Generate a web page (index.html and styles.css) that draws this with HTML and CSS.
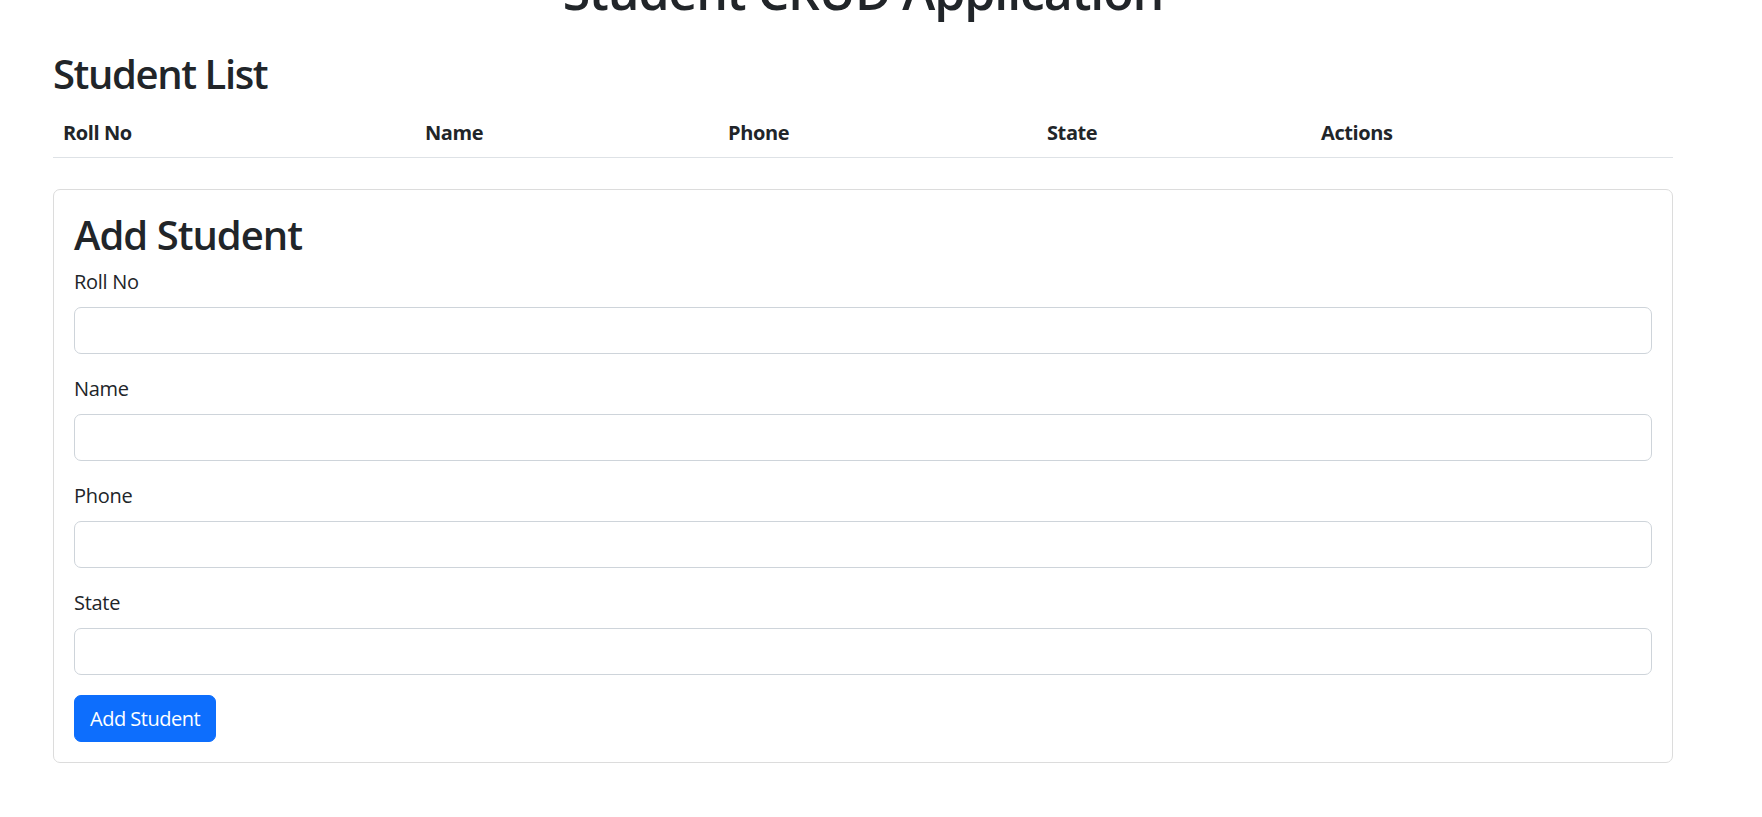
FILE: index.html
```html
<!DOCTYPE html>
<html lang="en">
<head>
<meta charset="utf-8">
<title>Student CRUD Application</title>
<link rel="stylesheet" href="styles.css">
</head>
<body>
<div class="container">
  <h1 class="app-title">Student CRUD Application</h1>
  <h2 class="section-title">Student List</h2>
  <table class="student-table">
    <colgroup>
      <col class="col-roll">
      <col class="col-name">
      <col class="col-phone">
      <col class="col-state">
      <col class="col-actions">
    </colgroup>
    <thead>
      <tr>
        <th>Roll No</th>
        <th>Name</th>
        <th>Phone</th>
        <th>State</th>
        <th>Actions</th>
      </tr>
    </thead>
    <tbody></tbody>
  </table>
  <div class="card">
    <h2 class="card-title">Add Student</h2>
    <form class="student-form">
      <div class="field">
        <label class="field-label" for="roll">Roll No</label>
        <input class="field-input" id="roll" type="text">
      </div>
      <div class="field">
        <label class="field-label" for="name">Name</label>
        <input class="field-input" id="name" type="text">
      </div>
      <div class="field">
        <label class="field-label" for="phone">Phone</label>
        <input class="field-input" id="phone" type="text">
      </div>
      <div class="field">
        <label class="field-label" for="state">State</label>
        <input class="field-input" id="state" type="text">
      </div>
      <button class="btn-primary" type="button">Add Student</button>
    </form>
  </div>
</div>
</body>
</html>
```
FILE: styles.css
```css
* { box-sizing: border-box; }
html, body { margin: 0; padding: 0; background: #fff; }
body {
  font-family: "Open Sans", "Noto Sans", sans-serif;
  color: #212529;
  font-size: 20px;
  line-height: 30px;
  letter-spacing: -0.3px;
  overflow: hidden;
}
.container {
  width: 1620px;
  margin-left: 53px;
}
.app-title {
  font-size: 50px;
  line-height: 60px;
  font-weight: 600;
  letter-spacing: -1.1px;
  text-align: center;
  margin: -39px 0 29px;
}
.section-title {
  font-size: 40px;
  line-height: 48px;
  font-weight: 600;
  letter-spacing: -1.4px;
  margin: 0 0 9px;
}
.student-table {
  width: 1620px;
  border-collapse: collapse;
  table-layout: fixed;
  margin-bottom: 31px;
}
.col-roll { width: 362px; }
.col-name { width: 303px; }
.col-phone { width: 319px; }
.col-state { width: 274px; }
.col-actions { width: 362px; }
.student-table th {
  text-align: left;
  font-weight: 700;
  letter-spacing: -0.4px;
  padding: 11px 10px 9px;
  border-bottom: 1px solid #dee2e6;
}
.card {
  border: 1px solid #dcdcdc;
  border-radius: 7px;
  padding: 21px 20px 20px;
}
.card-title {
  font-size: 40px;
  line-height: 48px;
  font-weight: 600;
  letter-spacing: -1px;
  margin: 0 0 8px;
}
.student-form { margin: 0; }
.field { margin-bottom: 20px; }
.field-label {
  display: block;
  margin-bottom: 10px;
}
.field-input {
  display: block;
  width: 100%;
  height: 47px;
  border: 1px solid #ced4da;
  border-radius: 7px;
  background: #fff;
  font: inherit;
  padding: 7px 15px;
}
.btn-primary {
  display: inline-block;
  height: 47px;
  background: #0d6efd;
  color: #fff;
  border: 1px solid #0d6efd;
  border-radius: 7px;
  font: inherit;
  letter-spacing: -0.5px;
  padding: 7px 15px;
  cursor: pointer;
}
```
